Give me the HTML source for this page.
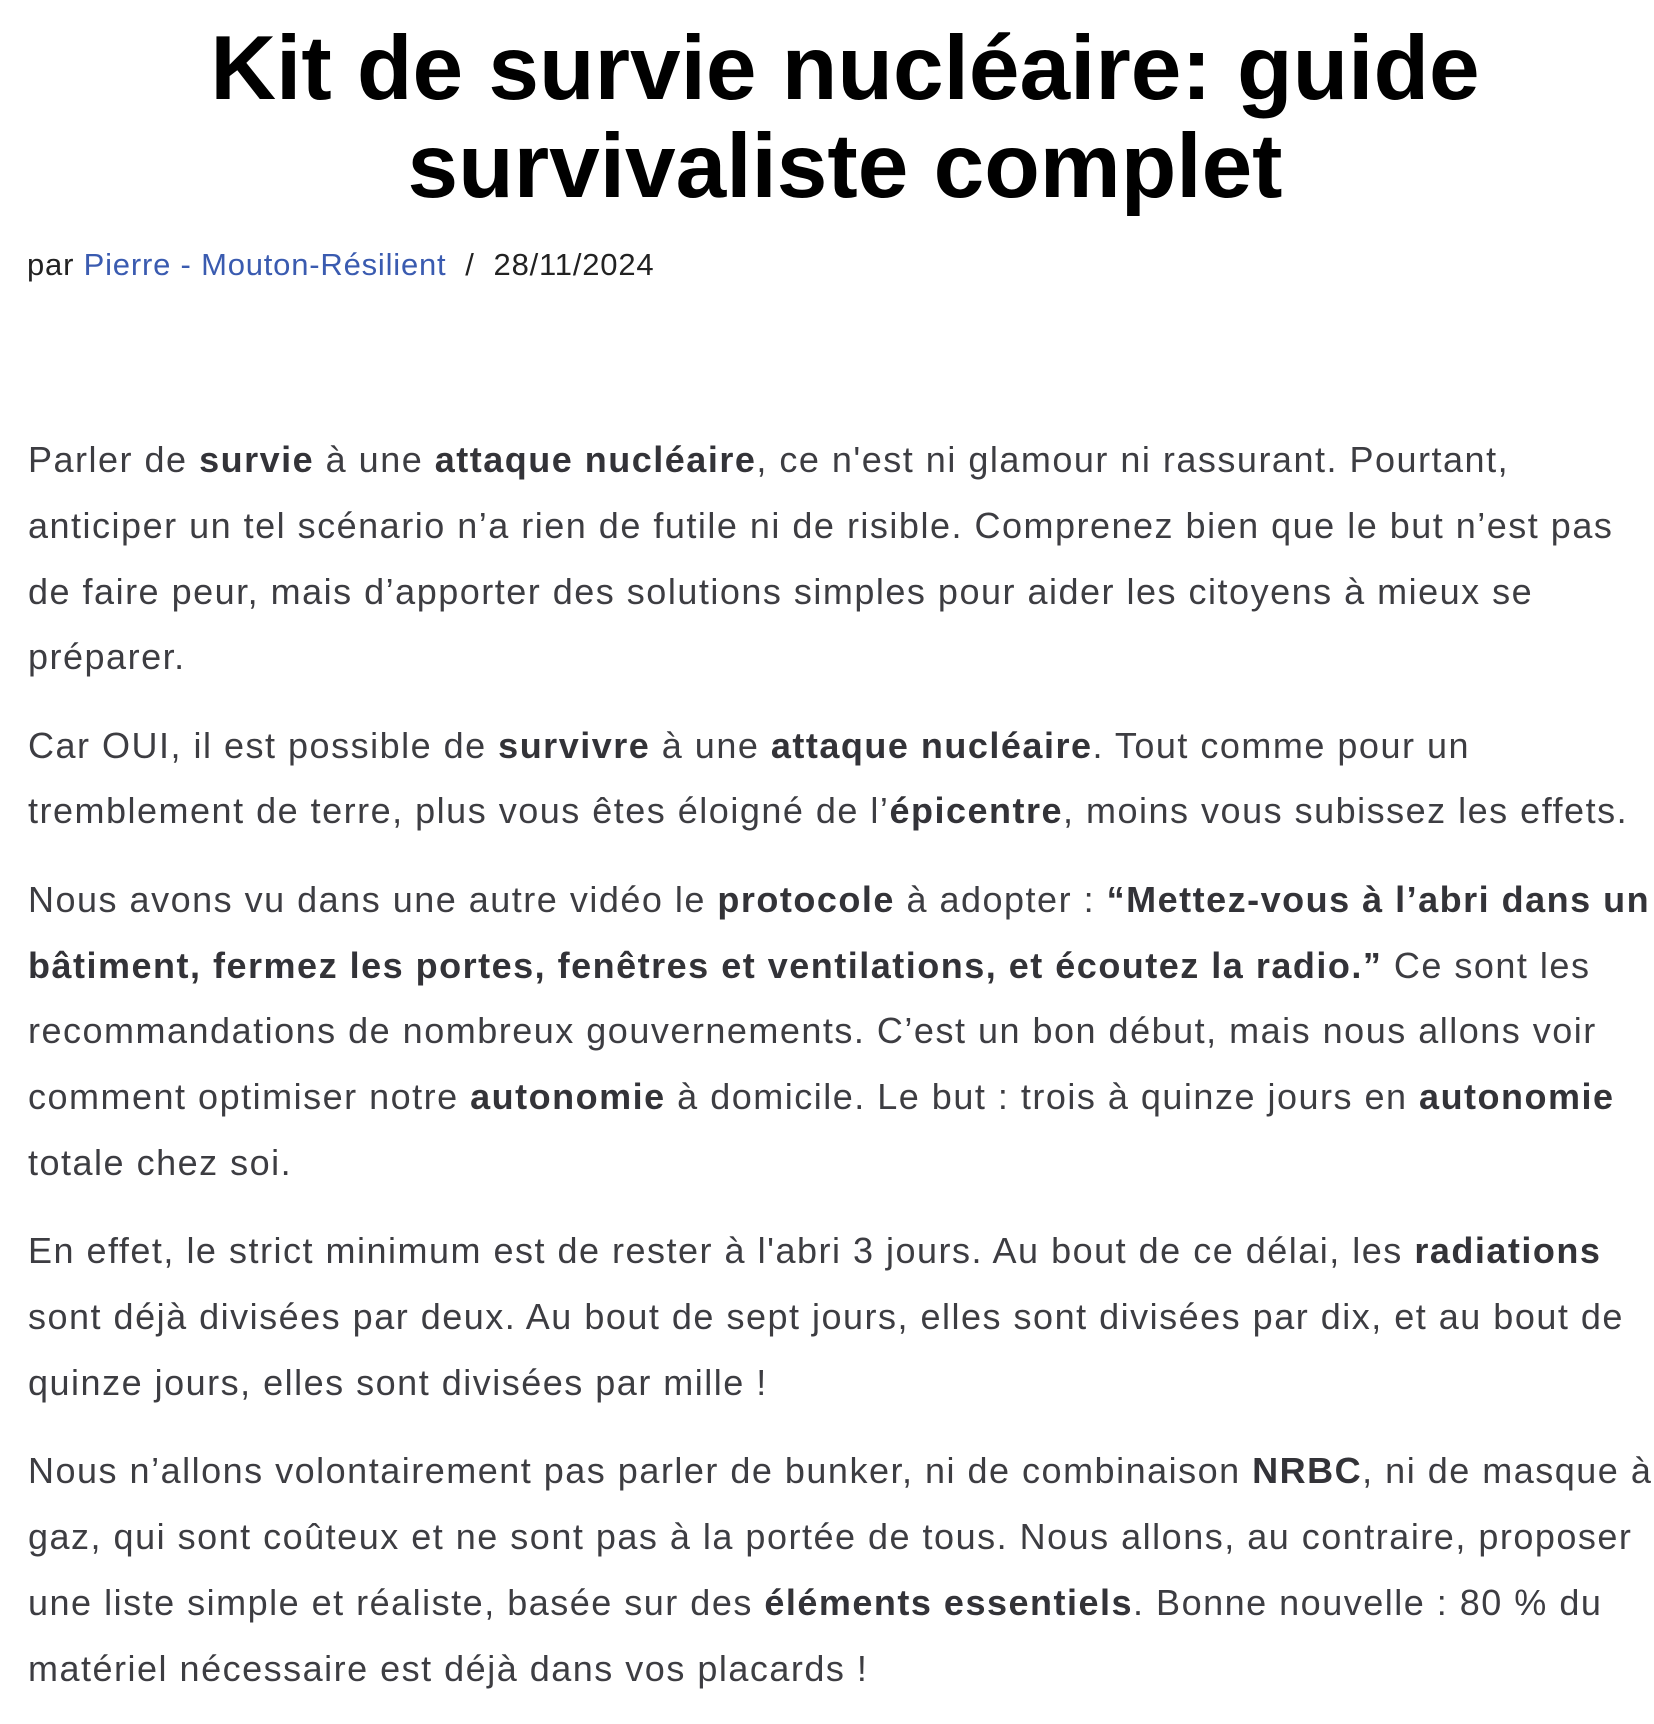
<!DOCTYPE html>
<html><head><meta charset="utf-8"><style>
html,body{margin:0;padding:0;background:#fff;width:1654px;height:1652px;overflow:hidden}
body{font-family:"Liberation Sans",Arial,sans-serif}
h1{margin:0;position:absolute;top:20px;left:18px;width:1654px;text-align:center;font-size:91px;line-height:98px;font-weight:bold;color:#000}
.meta{position:absolute;top:247px;left:27px;font-size:31px;letter-spacing:0.8px;color:#222;white-space:nowrap}
.meta a{color:#3a5bb0;text-decoration:none}
.c{position:absolute;top:427px;left:28px;font-size:36px;letter-spacing:1.5px;line-height:65.8px;color:#3d3d42;white-space:nowrap}
.c p{margin:0 0 22.5px 0}
b{color:#333338}
</style></head><body>
<h1>Kit de survie nucléaire: guide<br>survivaliste complet</h1>
<div class="meta">par <a>Pierre - Mouton-Résilient</a> &nbsp;/&nbsp; 28/11/2024</div>
<div class="c">
<p>Parler de <b>survie</b> à une <b>attaque nucléaire</b>, ce n'est ni glamour ni rassurant. Pourtant,<br>anticiper un tel scénario n’a rien de futile ni de risible. Comprenez bien que le but n’est pas<br>de faire peur, mais d’apporter des solutions simples pour aider les citoyens à mieux se<br>préparer.</p>
<p>Car OUI, il est possible de <b>survivre</b> à une <b>attaque nucléaire</b>. Tout comme pour un<br>tremblement de terre, plus vous êtes éloigné de l’<b>épicentre</b>, moins vous subissez les effets.</p>
<p>Nous avons vu dans une autre vidéo le <b>protocole</b> à adopter : <b>“Mettez-vous à l’abri dans un<br>bâtiment, fermez les portes, fenêtres et ventilations, et écoutez la radio.”</b> Ce sont les<br>recommandations de nombreux gouvernements. C’est un bon début, mais nous allons voir<br>comment optimiser notre <b>autonomie</b> à domicile. Le but : trois à quinze jours en <b>autonomie</b><br>totale chez soi.</p>
<p>En effet, le strict minimum est de rester à l'abri 3 jours. Au bout de ce délai, les <b>radiations</b><br>sont déjà divisées par deux. Au bout de sept jours, elles sont divisées par dix, et au bout de<br>quinze jours, elles sont divisées par mille !</p>
<p>Nous n’allons volontairement pas parler de bunker, ni de combinaison <b>NRBC</b>, ni de masque à<br>gaz, qui sont coûteux et ne sont pas à la portée de tous. Nous allons, au contraire, proposer<br>une liste simple et réaliste, basée sur des <b>éléments essentiels</b>. Bonne nouvelle : 80 % du<br>matériel nécessaire est déjà dans vos placards !</p>
</div>
</body></html>
